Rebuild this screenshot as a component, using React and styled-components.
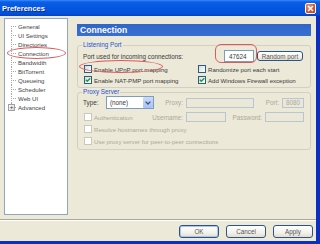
import React from 'react'
import styled, { createGlobalStyle, css } from 'styled-components'

const GlobalStyle = createGlobalStyle`
    html, body {
        margin: 0;
        padding: 0;
        background: #ece9d8;
    }
    * {
        box-sizing: border-box;
    }
`

const Window = styled.div`
    position: relative;
    width: 320px;
    height: 244px;
    overflow: hidden;
    display: flex;
    flex-direction: column;
    background: #ece9d8;
    font-family: "Liberation Sans", Arial, sans-serif;
    font-size: 6.3px;
    color: #3a3a3a;
`
const TitleBar = styled.div`
    height: 16px;
    flex: none;
    display: flex;
    align-items: center;
    justify-content: space-between;
    padding: 0 4px 0 2px;
    background: linear-gradient(#3d8af7 0%, #0a5fe6 12%, #0457e0 50%, #0450d8 85%, #0342c4 100%);
`
const Title = styled.div`
    color: #fff;
    font-weight: bold;
    font-size: 7.5px;
    text-shadow: 1px 1px 0 #0b2a86;
`
const CloseButton = styled.div`
    width: 11px;
    height: 11px;
    border: 1px solid #fff;
    border-radius: 2px;
    background: radial-gradient(circle at 35% 30%, #f39a7c, #e0522e 55%, #c03a18);
    display: flex;
    align-items: center;
    justify-content: center;
`
const Frame = styled.div`
    flex: 1;
    display: flex;
    flex-direction: column;
    border-right: 4px solid #0a2fc2;
    border-bottom: 3px solid #0a2fc2;
`
const Body = styled.div`
    height: 203px;
    flex: none;
    display: flex;
    padding-top: 2px;
`
const Tree = styled.div`
    margin-left: 4px;
    width: 64px;
    height: 197px;
    background: #fff;
    border: 1px solid #8fa6bf;
    padding-top: 3px;
    font-size: 6.1px;
    color: #444;
`
const TreeItem = styled.div`
    position: relative;
    height: 9px;
    line-height: 9px;
    padding-left: 13px;
    white-space: nowrap;
    &::before {
        content: '';
        position: absolute;
        left: 6px;
        top: 4px;
        width: 5px;
        border-top: 1px dotted #a8a8a8;
    }
    &::after {
        content: '';
        position: absolute;
        left: 6px;
        top: ${p => (p.$first ? '4px' : '0')};
        height: ${p => (p.$last ? '4px' : p.$first ? '5px' : '9px')};
        border-left: 1px dotted #a8a8a8;
    }
`
const Expander = styled.span`
    position: absolute;
    left: 3px;
    top: 1px;
    width: 7px;
    height: 7px;
    z-index: 1;
    border: 1px solid #9aa3a8;
    background: linear-gradient(135deg, #fff, #d8d8d0);
    display: flex;
    align-items: center;
    justify-content: center;
    font-size: 6px;
    line-height: 5px;
    color: #333;
`
const Panel = styled.div`
    margin-left: 9px;
    width: 234px;
    padding-top: 6px;
    display: flex;
    flex-direction: column;
`
const PanelHeader = styled.div`
    height: 12px;
    line-height: 12px;
    padding-left: 3px;
    color: #fff;
    font-weight: bold;
    font-size: 8.6px;
    background: linear-gradient(#2f64c9, #3a6fd2);
`
const Group = styled.fieldset`
    margin: ${p => (p.$first ? '5px' : '0')} 0 0;
    padding: 0 7px ${p => p.$pb}px 5px;
    border: 1px solid #d2d0c2;
    border-radius: 3px;
    min-width: 0;
`
const Legend = styled.legend`
    padding: 0 1px;
    margin-left: -1px;
    line-height: 8px;
    color: #2553cc;
`
const PortRow = styled.div`
    margin-top: 1px;
    height: 12px;
    display: flex;
    align-items: center;
`
const Spacer = styled.div`
    flex: 1;
`
const TextBox = styled.div`
    width: ${p => p.$w}px;
    height: ${p => p.$h || 10}px;
    border: 1px solid ${p => (p.$disabled ? '#b8c6d4' : '#7f9db9')};
    background: ${p => (p.$disabled ? '#ebe8d8' : '#fff')};
    color: ${p => (p.$disabled ? '#aca899' : '#3a3a3a')};
    display: flex;
    align-items: center;
    padding-left: ${p => p.$pl || 3}px;
`
const XpButton = styled.div`
    width: ${p => p.$w}px;
    height: ${p => p.$h}px;
    margin-left: ${p => p.$ml || 0}px;
    border: 1px solid #2a5585;
    border-radius: 3px;
    background: linear-gradient(#fff, #f3f1ea 60%, #e2ddd0);
    display: flex;
    align-items: center;
    justify-content: center;
    color: #555;
    ${p => p.$default && css`
        box-shadow: inset 0 0 0 1px #a9c4ee;
    `}
`
const CheckGrid = styled.div`
    margin-top: 2px;
    display: grid;
    grid-template-columns: 114px 1fr;
    grid-auto-rows: 10px;
    row-gap: 1px;
`
const Check = styled.div`
    display: flex;
    align-items: center;
    gap: 2px;
    height: 10px;
    font-size: 6.1px;
    margin-top: ${p => p.$mt || 0}px;
    color: ${p => (p.$disabled ? '#aca899' : 'inherit')};
    white-space: nowrap;
`
const Box = styled.span`
    width: 8px;
    height: 8px;
    flex: none;
    margin-left: 1px;
    border: 1px solid ${p => (p.$disabled ? '#cac8bb' : '#2c5d8a')};
    background: ${p => (p.$disabled ? '#fff' : 'linear-gradient(135deg, #dcdbd4, #fff)')};
    display: flex;
    align-items: center;
    justify-content: center;
`
const ProxyRow = styled.div`
    display: grid;
    grid-template-columns: 23px 48px 32px 68px 28px 22px;
    align-items: center;
    height: 13px;
`
const AuthRow = styled.div`
    margin-top: 3px;
    display: grid;
    grid-template-columns: 68px 35px 40px 39px 39px;
    align-items: center;
    height: 10px;
`
const FieldLabel = styled.div`
    text-align: ${p => (p.$right ? 'right' : 'left')};
    padding-right: ${p => (p.$right ? 3 : 0)}px;
    color: ${p => (p.$disabled ? '#aca899' : 'inherit')};
    white-space: nowrap;
`
const Select = styled.div`
    height: 13px;
    border: 1px solid #7f9db9;
    background: #fff;
    display: flex;
    align-items: center;
    justify-content: space-between;
    padding-left: 3px;
`
const SelectArrow = styled.span`
    width: 10px;
    height: 11px;
    border-radius: 1px;
    background: linear-gradient(#cbdafd, #a9c2f4);
    display: flex;
    align-items: center;
    justify-content: center;
`
const Separator = styled.div`
    height: 2px;
    flex: none;
    border-top: 1px solid #aca899;
    border-bottom: 1px solid #fff;
`
const Footer = styled.div`
    height: 20px;
    display: flex;
    justify-content: flex-end;
    gap: 7px;
    padding: 4px 3px 0 0;
`
const Mark = styled.div`
    position: absolute;
    border: 1px solid #dc5a5a;
    pointer-events: none;
`
const ConnectionMark = styled(Mark)`
    left: 7px;
    top: 47px;
    width: 59px;
    height: 12px;
    border-radius: 50%;
`
const UpnpMark = styled(Mark)`
    left: 79px;
    top: 60px;
    width: 84px;
    height: 13px;
    border-radius: 50%;
`
const PortMark = styled(Mark)`
    left: 215px;
    top: 44px;
    width: 42px;
    height: 19px;
    border-radius: 6px;
`

const CheckMark = () => (
    <svg width="6" height="6" viewBox="0 0 6 6">
        <path d="M0.8 2.8 L2.3 4.3 L5.3 1.2" fill="none" stroke="#21a121" strokeWidth="1.4" />
    </svg>
)

const CheckBox = ({ checked, disabled, label, mt }) => (
    <Check $disabled={disabled} $mt={mt}>
        <Box $disabled={disabled}>{checked && <CheckMark />}</Box>
        {label}
    </Check>
)

const treeItems = ['General', 'UI Settings', 'Directories', 'Connection', 'Bandwidth', 'BitTorrent', 'Queueing', 'Scheduler', 'Web UI']

export default function App() {
    return (
        <Window>
            <GlobalStyle />
            <TitleBar>
                <Title>Preferences</Title>
                <CloseButton>
                    <svg width="7" height="7" viewBox="0 0 7 7">
                        <path d="M1 1 L6 6 M6 1 L1 6" stroke="#fff" strokeWidth="1.4" />
                    </svg>
                </CloseButton>
            </TitleBar>
            <Frame>
                <Body>
                    <Tree>
                        {treeItems.map((t, i) => (
                            <TreeItem key={t} $first={i === 0}>{t}</TreeItem>
                        ))}
                        <TreeItem $last>
                            <Expander>+</Expander>
                            Advanced
                        </TreeItem>
                    </Tree>
                    <Panel>
                        <PanelHeader>Connection</PanelHeader>
                        <Group $first $pb={2}>
                            <Legend>Listening Port</Legend>
                            <PortRow>
                                Port used for incoming connections:
                                <Spacer />
                                <TextBox $w={30} $h={12} $pl={4}>47624</TextBox>
                                <XpButton $w={46} $h={10} $ml={3}>Random port</XpButton>
                            </PortRow>
                            <CheckGrid>
                                <CheckBox label="Enable UPnP port mapping" />
                                <CheckBox label="Randomize port each start" />
                                <CheckBox checked label="Enable NAT-PMP port mapping" />
                                <CheckBox checked label="Add Windows Firewall exception" />
                            </CheckGrid>
                        </Group>
                        <Group $pb={3}>
                            <Legend>Proxy Server</Legend>
                            <ProxyRow>
                                <FieldLabel>Type:</FieldLabel>
                                <Select>
                                    (none)
                                    <SelectArrow>
                                        <svg width="6" height="4" viewBox="0 0 6 4">
                                            <path d="M0.6 0.6 L3 3 L5.4 0.6" fill="none" stroke="#3f5479" strokeWidth="1.3" />
                                        </svg>
                                    </SelectArrow>
                                </Select>
                                <FieldLabel $right $disabled>Proxy:</FieldLabel>
                                <TextBox $w={68} $disabled />
                                <FieldLabel $right $disabled>Port:</FieldLabel>
                                <TextBox $w={22} $disabled>8080</TextBox>
                            </ProxyRow>
                            <AuthRow>
                                <CheckBox disabled label="Authentication" />
                                <FieldLabel $right $disabled>Username:</FieldLabel>
                                <TextBox $w={40} $disabled />
                                <FieldLabel $right $disabled>Password:</FieldLabel>
                                <TextBox $w={39} $disabled />
                            </AuthRow>
                            <CheckBox disabled mt={2} label="Resolve hostnames through proxy" />
                            <CheckBox disabled mt={2} label="Use proxy server for peer-to-peer connections" />
                        </Group>
                    </Panel>
                </Body>
                <Separator />
                <Footer>
                    <XpButton $w={40} $h={13} $default>OK</XpButton>
                    <XpButton $w={40} $h={13}>Cancel</XpButton>
                    <XpButton $w={40} $h={13}>Apply</XpButton>
                </Footer>
            </Frame>
            <ConnectionMark />
            <UpnpMark />
            <PortMark />
        </Window>
    )
}
